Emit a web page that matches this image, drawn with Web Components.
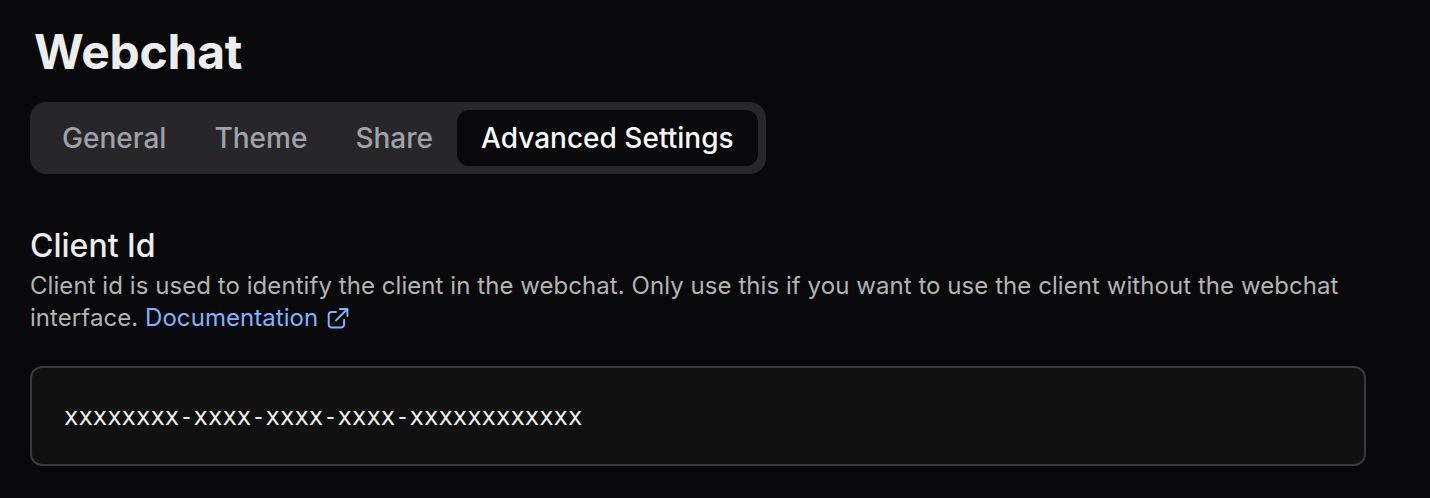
<!DOCTYPE html>
<html lang="en"><head><meta charset="utf-8"><title>Webchat</title>
<style>html,body{margin:0;height:100%;background:#09090b}body{font-family:Inter,"Liberation Sans",sans-serif;color:#ededed;overflow:hidden}</style></head>
<body>
<settings-page>
<page-title>Webchat</page-title>
<tab-bar><tab-item>General</tab-item><tab-item>Theme</tab-item><tab-item>Share</tab-item><tab-item active>Advanced Settings</tab-item></tab-bar>
<setting-section heading="Client Id">Client id is used to identify the client in the webchat. Only use this if you want to use the client without the webchat interface. <doc-link>Documentation</doc-link></setting-section>
<code-field>xxxxxxxx-xxxx-xxxx-xxxx-xxxxxxxxxxxx</code-field>
</settings-page>
<script>
const define=(name,markup,setup)=>{
  customElements.define(name,class extends HTMLElement{
    constructor(){super();this.attachShadow({mode:"open"}).innerHTML=markup;}
    connectedCallback(){if(setup)setup(this);}
  });
};
define("settings-page",`<style>:host{display:flex;flex-direction:column;align-items:flex-start;box-sizing:border-box;width:1430px;height:498px;padding:24px 64px 0 30px;background:#09090b}</style><slot></slot>`);
define("page-title",`<style>:host{display:block;padding-left:4px;height:78px}h1{margin:0;font-size:48px;line-height:56px;font-weight:700;letter-spacing:-.25px;white-space:nowrap}</style><h1><slot></slot></h1>`);
define("tab-bar",`<style>:host{display:flex;box-sizing:border-box;height:72px;padding:8px;border-radius:16px;background:#27272a}</style><slot></slot>`);
define("tab-item",`<style>:host{display:flex;align-items:center;padding:0 24px;height:56px;border-radius:12px;font-size:28px;line-height:40px;font-weight:500;letter-spacing:.015px;color:#a1a1aa;white-space:nowrap}:host([active]){background:#09090b;color:#fafafa}</style><slot></slot>`);
define("setting-section",`<style>:host{display:block;margin-top:50px;width:1336px}h2{margin:0;font-size:32px;line-height:44px;font-weight:500;color:#ededed}p{margin:2px 0 0;font-size:24px;line-height:32px;color:#b4b4b4;letter-spacing:.06px}</style><h2></h2><p><slot></slot></p>`,el=>{el.shadowRoot.querySelector("h2").textContent=el.getAttribute("heading");});
define("doc-link",`<style>:host{display:inline;color:#81b3ff}svg{display:inline-block;vertical-align:-3px;margin-left:9px}</style><slot></slot><svg width="22" height="22" viewBox="0 0 22 22" fill="none" stroke="currentColor" stroke-width="2" stroke-linecap="round" stroke-linejoin="round"><path d="M13 2h7.4v7M9 13.4 20.4 2M9 5H4.7a3 3 0 0 0-3 3v9.4a3 3 0 0 0 3 3h9.4a3 3 0 0 0 3-3V13"/></svg>`);
define("code-field",`<style>:host{display:flex;align-items:center;box-sizing:border-box;width:1336px;height:100px;margin-top:32px;padding:2px 32px 0;border:2px solid #3a3a3a;border-radius:12px;background:#111;font-family:"DejaVu Sans Mono",monospace;font-size:24px;letter-spacing:-.05px;color:#ededed}</style><slot></slot>`);
</script></body></html>
